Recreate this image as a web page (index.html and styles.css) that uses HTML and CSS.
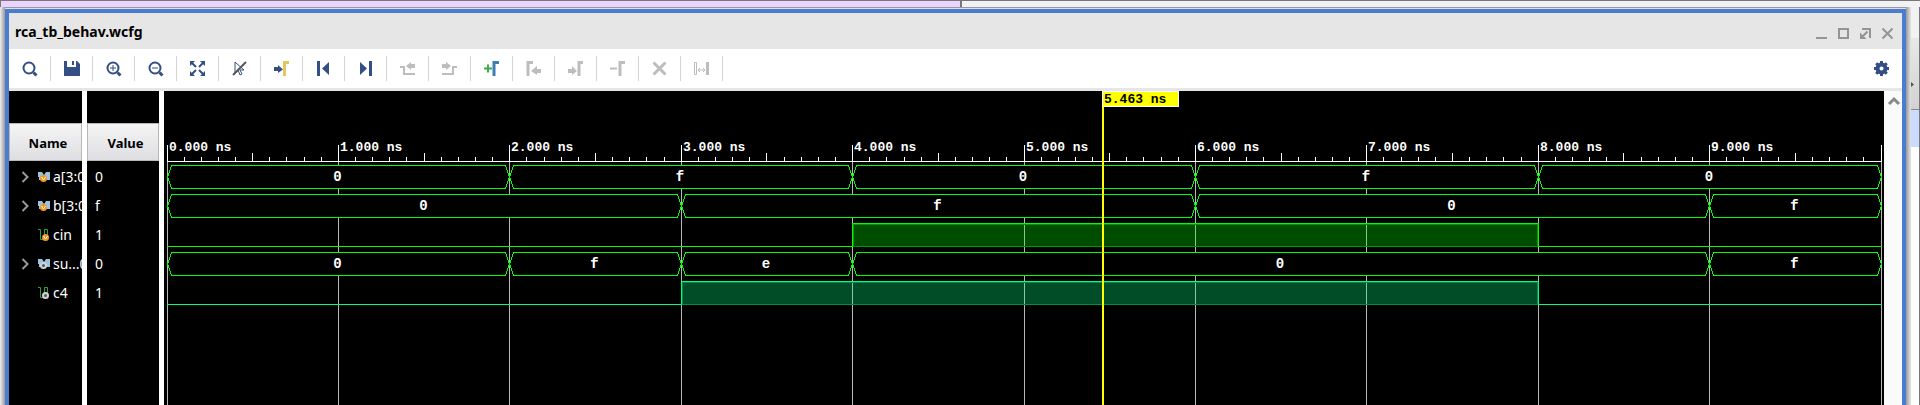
FILE: index.html
```html
<!DOCTYPE html>
<html lang="en">
<head>
<meta charset="utf-8">
<title>rca_tb_behav.wcfg</title>
<link rel="stylesheet" href="styles.css">
</head>
<body>
<div class="backdrop">
  <div class="behind-top"><span class="tab tab-active"></span><span class="tab"></span></div>
  <div class="frame">
    <div class="edge edge-left"></div>
    <main class="window">
      <header class="titlebar">
        <h1 class="title">rca_tb_behav.wcfg</h1>
        <div class="window-controls">
          <button class="control" aria-label="Minimize"><svg viewBox="0 0 12 12"><path d="M1 11h11" /></svg></button>
          <button class="control" aria-label="Maximize"><svg viewBox="0 0 12 12"><path d="M2 2h9v9H2z"/></svg></button>
          <button class="control" aria-label="Float"><svg viewBox="0 0 12 12"><path d="M3 2h8v9M8.500 4.500L4 9"/><path class="solid" d="M1 5.500V12h6.500z"/></svg></button>
          <button class="control" aria-label="Close"><svg viewBox="0 0 12 12"><path d="M1.500 1.500l10 10M11.500 1.500l-10 10"/></svg></button>
        </div>
      </header>
      <div class="toolbar">
        <button class="tool" aria-label="Find"><svg viewBox="0 0 16 16"><circle cx="7" cy="7" r="5.500"/><path class="thick" d="M11.500 11.500l3 3"/></svg></button>
        <button class="tool" aria-label="Save"><svg viewBox="0 0 16 16"><path class="solid" d="M0 0h3v6h9V0h1l3 3v12H0z M8 0h2v4H8z"/></svg></button>
        <button class="tool" aria-label="Zoom in"><svg viewBox="0 0 16 16"><circle cx="7" cy="7" r="5.500"/><path class="thin" d="M4 7h6M7 4v6"/><path class="thick" d="M11.500 11.500l3 3"/></svg></button>
        <button class="tool" aria-label="Zoom out"><svg viewBox="0 0 16 16"><circle cx="7" cy="7" r="5.500"/><path class="thin" d="M4 7h6"/><path class="thick" d="M11.500 11.500l3 3"/></svg></button>
        <button class="tool" aria-label="Zoom fit"><svg viewBox="0 0 16 16"><path class="solid" d="M0 0h5L0 5zM10 0h5v5zM0 10l5 5H0zM15 10v5h-5z"/><path d="M1 1l5 5M14 1L9 6M1 14l5-5M14 14L9 9"/></svg></button>
        <button class="tool" aria-label="Zoom to cursor"><svg viewBox="0 0 16 16"><path class="thin" d="M3 1v11l3-3 2 5 2-1-2-4h4z"/><path class="slash" d="M1 14L14 1"/></svg></button>
        <button class="tool" aria-label="Go to cursor"><svg viewBox="0 0 16 16"><path class="solid" d="M0 6h4V4l5 4.500L4 12v-2H0z"/><path class="gold" d="M10.500 15V1.500H15"/></svg></button>
        <button class="tool" aria-label="Go to time 0"><svg viewBox="0 0 16 16"><path class="solid" d="M1 0h3v15H1zM13 1v13L6 7.500z"/></svg></button>
        <button class="tool" aria-label="Go to last time"><svg viewBox="0 0 16 16"><path class="solid" d="M2 1v13l7-6.500zM11 0h3v15h-3z"/></svg></button>
        <button class="tool" disabled aria-label="Previous transition"><svg viewBox="0 0 16 16"><path d="M0 6h4v7h11"/><path class="solid" d="M15 3h-4V1L6 5l5 4V7h4z"/></svg></button>
        <button class="tool" disabled aria-label="Next transition"><svg viewBox="0 0 16 16"><path d="M0 13h11V6h4"/><path class="solid" d="M0 3h4V1l5 4-5 4V7H0z"/></svg></button>
        <button class="tool" aria-label="Add marker"><svg viewBox="0 0 16 16"><path class="green" d="M0 7.500h8M4 3.500v8"/><path class="azure" d="M10 15V1.500h5"/></svg></button>
        <button class="tool" disabled aria-label="Previous marker"><svg viewBox="0 0 16 16"><path class="medium" d="M2 15V1.500h5"/><path class="solid" d="M15 8h-4V5l-6 5 6 4v-2h4z"/></svg></button>
        <button class="tool" disabled aria-label="Next marker"><svg viewBox="0 0 16 16"><path class="medium" d="M11 15V1.500h4"/><path class="solid" d="M0 8h4V5l5 5-5 4v-2H0z"/></svg></button>
        <button class="tool" disabled aria-label="Remove marker"><svg viewBox="0 0 16 16"><path d="M0 7.500h7"/><path class="medium" d="M10 15V1.500h5"/></svg></button>
        <button class="tool" disabled aria-label="Delete"><svg viewBox="0 0 16 16"><path class="thick" d="M1.500 1.500l12 12M13.500 1.500l-12 12"/></svg></button>
        <button class="tool" disabled aria-label="Swap cursors"><svg viewBox="0 0 16 16"><path class="thin" d="M.5 1.500h2v12h-2zM4 9h7M6 7L4 9l2 2M9 7l2 2-2 2"/><path class="solid" d="M12 1h3v13h-3z"/></svg></button>
        <button class="tool settings" aria-label="Settings"><svg viewBox="0 0 16 16"><circle class="ring" cx="7.500" cy="7.500" r="4"/><path class="teeth" d="M7.500 0v3M7.500 12v3M0 7.500h3M12 7.500h3M2.200 2.200l2.100 2.100M10.700 10.700l2.100 2.100M2.200 12.800l2.100-2.100M10.700 4.300l2.100-2.100"/></svg></button>
      </div>
      <section class="viewer">
        <div class="column names">
          <div class="column-head">Name</div>
          <ul class="cells">
            <li class="cell"><svg class="chevron" viewBox="0 0 8 12"><path d="M1.500 1l5 5-5 5"/></svg><svg class="signal" viewBox="0 0 14 12"><use href="#bus"/><use href="#orange"/></svg><span>a[3:0]</span></li>
            <li class="cell"><svg class="chevron" viewBox="0 0 8 12"><path d="M1.500 1l5 5-5 5"/></svg><svg class="signal" viewBox="0 0 14 12"><use href="#bus"/><use href="#orange"/></svg><span>b[3:0]</span></li>
            <li class="cell"><svg class="chevron" viewBox="0 0 8 12"></svg><svg class="signal" viewBox="0 0 14 12"><use href="#wire"/><use href="#orange" x="2" y="1"/></svg><span>cin</span></li>
            <li class="cell"><svg class="chevron" viewBox="0 0 8 12"><path d="M1.500 1l5 5-5 5"/></svg><svg class="signal" viewBox="0 0 14 12"><use href="#bus"/><use href="#grey"/></svg><span>su...0]</span></li>
            <li class="cell"><svg class="chevron" viewBox="0 0 8 12"></svg><svg class="signal" viewBox="0 0 14 12"><use href="#wire"/><use href="#grey" x="2" y="1"/></svg><span>c4</span></li>
          </ul>
        </div>
        <div class="column values">
          <div class="column-head">Value</div>
          <ul class="cells">
            <li class="cell">0</li>
            <li class="cell">f</li>
            <li class="cell">1</li>
            <li class="cell">0</li>
            <li class="cell">1</li>
          </ul>
        </div>
        <div class="waves"><svg class="plot" id="plot" role="img" aria-label="Waveforms"></svg></div>
        <div class="scrollbar"><svg viewBox="0 0 14 10"><path d="M2 8l5-5 5 5"/></svg></div>
      </section>
    </main>
    <div class="edge edge-right"></div>
    <div class="behind-side"><span class="side-plain"></span><span class="side-grey">
      <svg viewBox="0 0 3 5"><path d="M0 0v5l3-2.500z"/></svg></span><span class="side-blue"></span></div>
  </div>
</div>
<svg class="defs" aria-hidden="true">
  <defs>
    <g id="bus"><path fill="#9cc3dc" d="M1 1h4l2 3 2-3h4v8H9L7 7 4 9H2V6H1z"/></g>
    <g id="wire"><path fill="none" stroke="#2f9e44" d="M1 .5h2.500v10H6M7.500 8V.5h3V6"/></g>
    <g id="orange"><circle cx="6.500" cy="7.500" r="3.500" fill="#f7941d"/><path d="M4.500 6l2 3 2-3" fill="none" stroke="#fff"/></g>
    <g id="grey"><circle cx="6.500" cy="7.500" r="3.500" fill="#d2d2d2"/><circle cx="6.500" cy="7.500" r="1.500" fill="#555"/></g>
  </defs>
</svg>
<script src="waves.js"></script>
</body>
</html>
```

FILE: styles.css
```css
* { box-sizing: border-box; }

body {
  margin: 0;
  font-family: "Noto Sans", "Open Sans", sans-serif;
  font-size: 14px;
  color: #000;
  background: #fff;
}

button {
  border: 0;
  padding: 0;
  background: none;
}

.backdrop {
  display: flex;
  flex-direction: column;
  height: 100vh;
  overflow: hidden;
  border-top: 1px solid #777;
  background: #f2f2f2;
}

.behind-top {
  display: flex;
  height: 6px;
  flex: none;
  border-left: 1px solid #777;
}

.tab { flex: 1; background: #f4f1f4; }
.tab-active { background: #e9d3ff; border-right: 2px solid #777; }

.frame {
  display: flex;
  flex: 1;
  min-height: 0;
}

.edge { width: 5px; flex: none; }
.edge-left { background: linear-gradient(to right, #eee, #999); }
.edge-right { background: linear-gradient(to right, #999, #e6e6e6); }

.window {
  flex: 1;
  min-width: 0;
  display: flex;
  flex-direction: column;
  border: 4px solid #4a7dcf;
  border-bottom: 0;
  margin-top: 2px;
  box-shadow: 0 -1px #e0e0e0, 0 -2px #999;
}

.titlebar {
  display: flex;
  align-items: center;
  justify-content: space-between;
  height: 36px;
  flex: none;
  padding: 2px 9px 0 6px;
  background: #e6e6e6;
}

.title { margin: 0; font-size: 14px; font-weight: 700; line-height: 20px; }

.window-controls { display: flex; gap: 10px; padding-top: 2px; }
.control { width: 12px; height: 12px; }
.control svg { display: block; width: 12px; height: 12px; overflow: visible; fill: none; stroke: #949494; stroke-width: 2; }
.control .solid { fill: #949494; stroke: none; }

.toolbar {
  display: flex;
  align-items: center;
  height: 42px;
  flex: none;
  border-bottom: 3px solid #e6e6e6;
  background: #fff;
}

.tool {
  width: 42px;
  height: 25px;
  border-right: 1px solid #d4d4d4;
  color: #344f86;
  display: flex;
  align-items: center;
  justify-content: center;
}
.tool:disabled { color: #bdbdbd; }
.settings { margin-left: auto; width: 40px; border: 0; }
.tool svg { width: 16px; height: 16px; overflow: visible; fill: none; stroke: currentColor; stroke-width: 2; }
.tool .solid { fill: currentColor; stroke: none; fill-rule: evenodd; }
.tool .thin { stroke-width: 1; }
.tool .thick { stroke-width: 3; }
.tool .medium { stroke-width: 3; }
.tool .slash { stroke: #555; stroke-width: 2; }
.tool .gold { stroke: #e2c75c; stroke-width: 3; }
.tool .green { stroke: #3aad45; stroke-width: 2; }
.tool .azure { stroke: #3a80b5; stroke-width: 3; }
.tool .teeth { stroke-width: 3; }
.tool .ring { stroke-width: 4; }

.viewer {
  display: flex;
  flex: 1;
  min-height: 0;
  background: #fff;
}

.column {
  flex: none;
  padding-top: 32px;
  margin-right: 5px;
  overflow: hidden;
  background: #000;
}
.names { width: 73px; }
.values { width: 72px; }

.column-head {
  height: 38px;
  line-height: 38px;
  border: 1px solid #b8b8b8;
  background: linear-gradient(#f5f5f5, #dedee2);
  font-size: 13px;
  font-weight: 700;
  text-align: center;
  padding-left: 5px;
}

.cells { margin: 0; padding: 1px 0 0; list-style: none; }
.cell {
  display: flex;
  align-items: center;
  height: 29px;
  color: #fff;
  white-space: nowrap;
}
.names .cell { padding-left: 12px; }
.values .cell { padding-left: 8px; }

.chevron { width: 8px; height: 12px; margin-right: 8px; flex: none; fill: none; stroke: #999; stroke-width: 2; }
.signal { width: 14px; height: 12px; margin-right: 2px; flex: none; overflow: visible; }

.waves { flex: 1; min-width: 0; background: #000; }
.plot {
  display: block;
  width: 100%;
  height: 100%;
  font-family: "Liberation Mono", monospace;
  font-size: 13px;
  font-weight: 700;
  shape-rendering: crispEdges;
  fill: #fff;
}
.grid { fill: #b8b8b8; }
.bus { fill: #000; stroke: #0f0; }
.edge-line { fill: none; stroke: #0f0; }
.high { fill: #0f0; fill-opacity: .3; stroke: #009600; }
.mint { stroke: #00ff80; }
.mint-high { fill: #00ff80; fill-opacity: .3; stroke: #008c50; }
.value { text-anchor: middle; font-size: 14px; }
.cursor-line { fill: #ff0; }
.cursor-tag { fill: #ff0; stroke: #fff; }
.cursor-text { fill: #000; }

.scrollbar { width: 18px; flex: none; padding: 5px 1px 0 3px; background: #fafafa; }
.scrollbar svg { display: block; width: 14px; height: 10px; fill: none; stroke: #888; stroke-width: 3; }

.behind-side {
  width: 9px;
  flex: none;
  display: flex;
  flex-direction: column;
  border-right: 1px solid #777;
  background: #fff;
}
.side-plain { height: 31px; background: #f2f2f2; }
.side-grey { height: 72px; padding-top: 44px; background: linear-gradient(#e8e8e8, #d2d2d2); border-bottom: 1px solid #888; }
.side-grey svg { display: block; width: 3px; height: 5px; fill: #555; }
.side-blue { height: 37px; background: #c9dcff; }
.defs { display: none; }
```

FILE: waves.js
```js
const plot = document.getElementById('plot');
const NS = 'http://www.w3.org/2000/svg';
const DURATION = 10;
const INSET = 3;
const ROW_TOP = 74;
const ROW_PITCH = 29;
const ROW_HEIGHT = 23;

const signals = [
  { bus: [[0, 2, '0'], [2, 4, 'f'], [4, 6, '0'], [6, 8, 'f'], [8, 10, '0']] },
  { bus: [[0, 3, '0'], [3, 6, 'f'], [6, 9, '0'], [9, 10, 'f']] },
  { high: [4, 8] },
  { bus: [[0, 2, '0'], [2, 3, 'f'], [3, 4, 'e'], [4, 9, '0'], [9, 10, 'f']] },
  { high: [3, 8], mint: true }
];

function add(tag, attrs, text) {
  const node = document.createElementNS(NS, tag);
  for (const key in attrs) node.setAttribute(key, attrs[key]);
  if (text) node.textContent = text;
  plot.appendChild(node);
}

function draw() {
  plot.replaceChildren();
  const span = plot.clientWidth - 2 * INSET;
  const height = plot.clientHeight;
  const x = t => INSET + Math.floor(t * span / DURATION);

  for (let t = 0; t <= DURATION; t++) {
    add('rect', { class: 'grid', x: x(t), y: 70, width: 1, height: height - 70 });
  }
  for (let i = 0; i <= DURATION * 10; i++) {
    const size = i % 10 === 0 ? 16 : i % 5 === 0 ? 8 : 4;
    add('rect', { x: x(i / 10), y: 70 - size, width: 1, height: size });
    if (i % 10 === 0 && i < DURATION * 10) {
      add('text', { x: x(i / 10) + 2, y: 60 }, (i / 10).toFixed(3) + ' ns');
    }
  }
  add('rect', { x: x(0), y: 70, width: span + 1, height: 1 });

  signals.forEach((signal, row) => {
    const top = ROW_TOP + row * ROW_PITCH + 0.5;
    const bottom = top + ROW_HEIGHT;
    const mid = (top + bottom) / 2;
    if (signal.bus) {
      for (const [from, to, label] of signal.bus) {
        const a = x(from) + 0.5;
        const b = x(to) + 0.5;
        add('path', { class: 'bus', d: `M${a} ${mid}L${a + 4} ${top}H${b - 4}L${b} ${mid}L${b - 4} ${bottom}H${a + 4}Z` });
        add('text', { class: 'value', x: (a + b) / 2 - 1, y: mid + 4 }, label);
      }
      return;
    }
    const a = x(signal.high[0]) + 0.5;
    const b = x(signal.high[1]) + 0.5;
    add('path', {
      class: signal.mint ? 'edge-line mint' : 'edge-line',
      d: `M${x(0)} ${bottom}H${a}V${top}H${b}V${bottom}H${x(DURATION) + 1}`
    });
    add('rect', {
      class: signal.mint ? 'mint-high' : 'high',
      x: a + 1, y: top + 1, width: b - a - 2, height: ROW_HEIGHT - 1
    });
  });

  const cursor = x(5.463) - 1;
  add('rect', { class: 'cursor-line', x: cursor, y: 0, width: 2, height });
  add('rect', { class: 'cursor-tag', x: cursor + 0.5, y: 0.5, width: 76, height: 15 });
  add('text', { class: 'cursor-text', x: cursor + 2, y: 12 }, '5.463 ns');
}

draw();
window.addEventListener('resize', draw);
```
